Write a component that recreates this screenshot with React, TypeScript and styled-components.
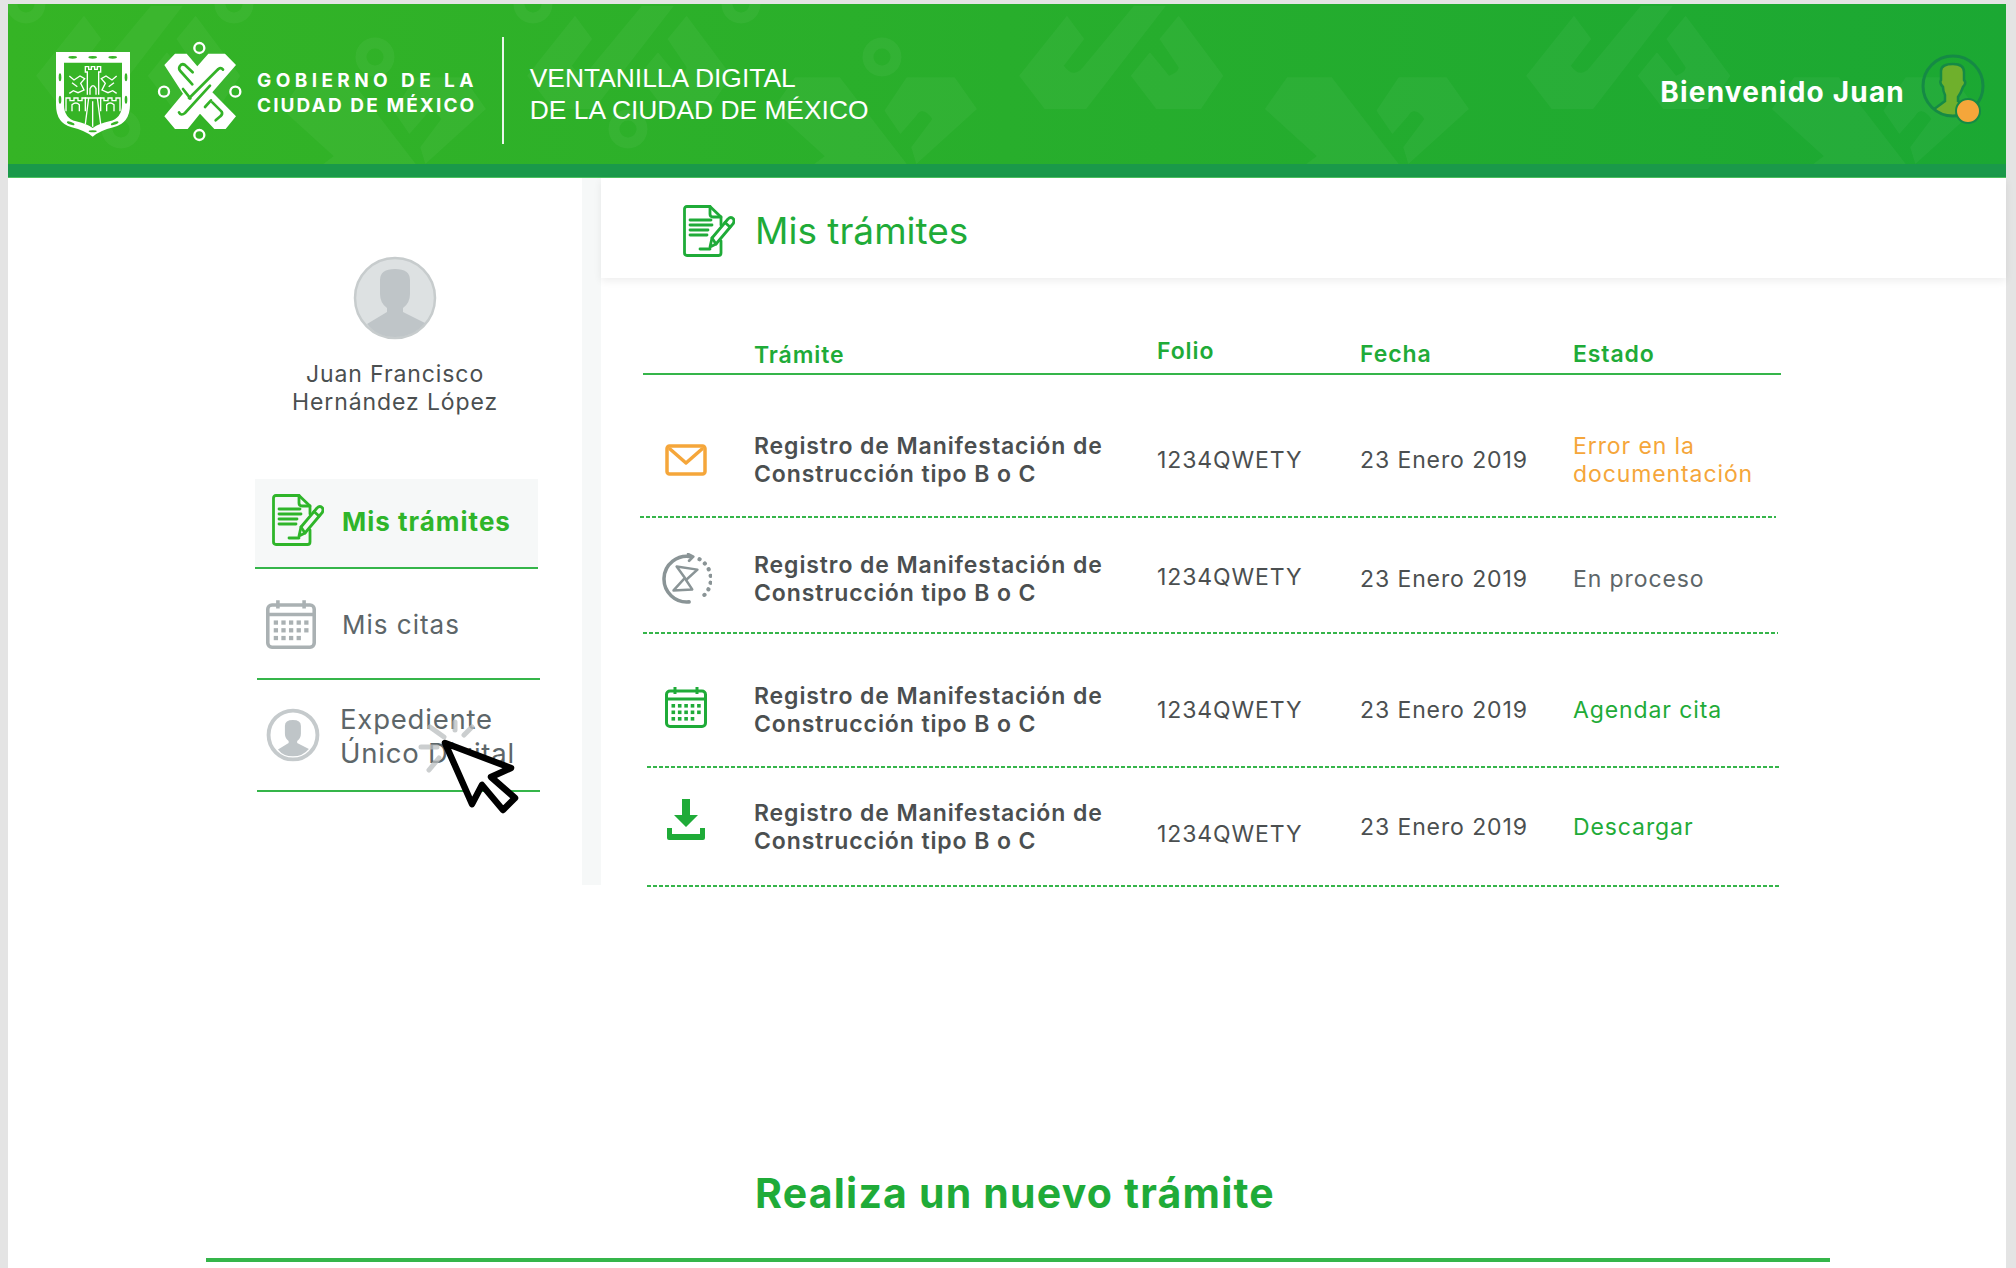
import styled, { createGlobalStyle } from "styled-components";

const GREEN = "#1fab38";
const ORANGE = "#f5a63a";
const TEXT = "#4b4f50";
const GREY = "#5d6669";

const GlobalStyle = createGlobalStyle`
	html, body {
		margin: 0;
		padding: 0;
		background: #e4e4e4;
	}
	* {
		box-sizing: border-box;
	}
`;

const Page = styled.div`
	width: 2016px;
	height: 1268px;
	padding: 4px 10px 0 8px;
	overflow: hidden;
	font-family: Inter, "Open Sans", sans-serif;
`;

const Card = styled.div`
	position: relative;
	height: 100%;
	background: #fff;
`;

const TopBar = styled.header`
	position: relative;
	display: flex;
	align-items: center;
	height: 160px;
	padding: 12px 13px 0 46px;
	background: linear-gradient(90deg, #35b425, #1ba833);
	color: #fff;
	overflow: hidden;
`;

const Pattern = styled.svg`
	position: absolute;
	left: 0;
	top: 0;
`;

const TopBand = styled.div`
	height: 14px;
	background: #1a994a;
	border-bottom: 1px solid #4cc25f;
`;

const Shield = styled.svg`
	position: relative;
	width: 85px;
	height: 92px;
	margin: 8px 20px 0 -4px;
	flex: none;
`;

const CityLogo = styled.svg`
	position: relative;
	width: 90px;
	height: 105px;
	margin-top: 2px;
	flex: none;
`;

const GovText = styled.div`
	position: relative;
	margin: 6px 0 0 12px;
	font-weight: 700;
	font-size: 19px;
	line-height: 25px;
	white-space: nowrap;
`;

const GovLine = styled.div<{ $track: number }>`
	letter-spacing: ${(p) => p.$track}px;
`;

const Divider = styled.div`
	position: relative;
	width: 2px;
	height: 107px;
	margin: 0 26px 0 24px;
	background: rgba(255, 255, 255, 0.9);
`;

const AppName = styled.div`
	position: relative;
	margin-top: 8px;
	font-family: "Liberation Sans", Arial, sans-serif;
	font-size: 26.4px;
	line-height: 32px;
	white-space: nowrap;
`;

const Welcome = styled.div`
	position: relative;
	margin: 3px 0 0 auto;
	font-size: 28px;
	font-weight: 700;
	letter-spacing: 1.2px;
`;

const UserBadge = styled.svg`
	position: relative;
	width: 74px;
	height: 74px;
	margin-left: 14px;
	flex: none;
`;

const Body = styled.div`
	display: flex;
	height: 707px;
`;

const Sidebar = styled.aside`
	display: flex;
	flex-direction: column;
	width: 593px;
	padding: 78px 0 0 247px;
	border-right: 19px solid #f6f8f8;
	flex: none;
`;

const Profile = styled.div`
	display: flex;
	flex-direction: column;
	align-items: center;
	width: 280px;
`;

const Avatar = styled.svg`
	width: 84px;
	height: 84px;
`;

const UserName = styled.div`
	margin-top: 20px;
	font-size: 23px;
	letter-spacing: 0.9px;
	line-height: 28px;
	color: ${TEXT};
	text-align: center;
`;

const Menu = styled.nav`
	margin-top: 63px;
`;

const MenuItem = styled.div<{ $active?: boolean; $height: number; $shift: number; $textAt: number }>`
	display: grid;
	grid-template-columns: ${(p) => p.$textAt}px 1fr;
	align-items: center;
	width: 283px;
	height: ${(p) => p.$height}px;
	margin-left: ${(p) => p.$shift}px;
	padding-bottom: ${(p) => (p.$active ? 6 : 0)}px;
	background: ${(p) => (p.$active ? "#f6f8f8" : "transparent")};
	border-bottom: 2px solid #35b54a;
	color: ${(p) => (p.$active ? "#2fb52a" : GREY)};
	font-weight: ${(p) => (p.$active ? 700 : 400)};
`;

const MenuIcon = styled.div<{ $left: number; $tint: string }>`
	display: flex;
	padding-left: ${(p) => p.$left}px;
	color: ${(p) => p.$tint};
`;

const MenuLabel = styled.div<{ $size: number; $track: number; $leading: number }>`
	margin-top: 2px;
	font-size: ${(p) => p.$size}px;
	letter-spacing: ${(p) => p.$track}px;
	line-height: ${(p) => p.$leading}px;
	white-space: nowrap;
`;

const Main = styled.main`
	flex: 1;
	min-width: 0;
`;

const TitleBar = styled.div`
	display: flex;
	align-items: center;
	gap: 20px;
	height: 100px;
	padding: 5px 0 0 82px;
	background: #fff;
	box-shadow: 0 3px 8px rgba(0, 0, 0, 0.07);
`;

const TitleIcon = styled.div`
	display: flex;
	color: ${GREEN};
`;

const Title = styled.h1`
	margin: 0;
	font-size: 37px;
	font-weight: 400;
	color: ${GREEN};
`;

const Table = styled.div`
	width: 1138px;
	margin: 58px 0 0 42px;
`;

const columns = "111px 403px 203px 213px 208px";

const HeadRow = styled.div`
	display: grid;
	grid-template-columns: ${columns};
	height: 39px;
	border-bottom: 2px solid #35b54a;
	color: ${GREEN};
	font-size: 23px;
	letter-spacing: 0.9px;
	font-weight: 600;
	line-height: 36px;
`;

const HeadCell = styled.div<{ $nudge?: number }>`
	margin-top: ${(p) => p.$nudge ?? 0}px;
`;

const Row = styled.div<{ $top: number; $bottom: number }>`
	display: grid;
	grid-template-columns: ${columns};
	align-items: center;
	padding: ${(p) => p.$top}px 0 ${(p) => p.$bottom}px;
	font-size: 23px;
	letter-spacing: 0.9px;
	line-height: 28px;
	color: ${TEXT};
`;

const RowLine = styled.div<{ $left: number; $right: number }>`
	height: 2px;
	margin: 0 ${(p) => p.$right}px 0 ${(p) => p.$left}px;
	background: repeating-linear-gradient(90deg, #35b54a 0 4px, transparent 4px 6px);
`;

const RowIcon = styled.div<{ $tint: string; $lift: number }>`
	display: flex;
	justify-content: center;
	width: 85px;
	margin-top: ${(p) => -p.$lift * 2}px;
	color: ${(p) => p.$tint};
`;

const Procedure = styled.div`
	font-weight: 600;
`;

const Cell = styled.div<{ $nudge?: number }>`
	margin-top: ${(p) => (p.$nudge ?? 0) * 2}px;
`;

const Status = styled.div<{ $tint: string }>`
	color: ${(p) => p.$tint};
`;

const NewSection = styled.section`
	display: flex;
	flex-direction: column;
`;

const NewTitle = styled.h2`
	margin: 285px 0 0 16px;
	font-size: 41px;
	letter-spacing: 1.2px;
	line-height: 46px;
	font-weight: 700;
	color: ${GREEN};
	text-align: center;
`;

const NewLine = styled.div`
	width: 1624px;
	height: 4px;
	margin: 42px 0 0 198px;
	background: #35b54a;
`;

const CursorMark = styled.svg`
	position: absolute;
	left: 407px;
	top: 706px;
	width: 120px;
	height: 110px;
`;

const patternLobes = [
	"M30 215 105 35 132 105 100 185Q115 225 130 190L210 5H260L135 315H70Z",
	"M205 215 235 145 265 215Q280 205 280 190L250 105 280 35 350 215 315 315H245Z",
	"M415 315 450 220H520L625 480H480L515 430 485 345Q495 305 515 330L560 440 510 480Z",
	"M590 320 625 220H700L735 315 640 480 632 430 665 345Q650 305 640 335L615 390Z",
];

function HeaderPattern()
{
	return (
		<Pattern width="1998" height="160">
			{[-983, -492, 0, 507].map((offset) => (
				<g key={offset} transform={`translate(${992 + offset} 0) scale(0.638 0.3333)`} fill="#fff" fillOpacity="0.04">
					{patternLobes.map((d) => <path key={d} d={d} />)}
				</g>
			))}
			{[-983, -492, 0, 507].map((offset) => (
				<g key={offset} fill="none" stroke="#fff" strokeOpacity="0.045" strokeWidth="11">
					<circle cx={359 + 8 + offset} cy="53" r="14" />
					<circle cx={113 + offset} cy="125" r="14" />
					<circle cx={10 + offset + 8} cy="0" r="14" />
					<circle cx={218 + offset + 8} cy="0" r="14" />
				</g>
			))}
		</Pattern>
	);
}

function ShieldLogo()
{
	return (
		<Shield viewBox="0 0 255 276">
			<path d="M18 12H240V170Q240 225 190 238 150 248 128 266 105 248 65 238 18 225 18 170Z" fill="#fff" />
			<path d="M42 44H216V170Q216 210 178 220 148 226 128 240 108 226 78 220 42 210 42 170Z" fill="#36b426" />
			<g fill="#36b426">
				<ellipse cx="68" cy="28" rx="13" ry="4" />
				<ellipse cx="128" cy="28" rx="13" ry="4" />
				<ellipse cx="188" cy="28" rx="13" ry="4" />
				<ellipse cx="30" cy="88" rx="4" ry="12" />
				<ellipse cx="30" cy="155" rx="4" ry="12" />
				<ellipse cx="228" cy="88" rx="4" ry="12" />
				<ellipse cx="228" cy="155" rx="4" ry="12" />
				<ellipse cx="62" cy="226" rx="12" ry="4" transform="rotate(20 62 226)" />
				<ellipse cx="128" cy="250" rx="12" ry="3" />
				<ellipse cx="194" cy="226" rx="12" ry="4" transform="rotate(-20 194 226)" />
			</g>
			<g fill="none" stroke="#fff" strokeWidth="4">
				<path d="M112 140V72H106V56H116V64H124V56H134V64H142V56H152V72H146V140" />
				<path d="M120 140V122Q129 104 138 122V140" />
				<path d="M48 190V150H60V158H72V150H84V158H96V150H106V190M66 190V170Q78 160 88 170V190" />
				<path d="M152 190V150H162V158H174V150H186V158H198V150H210V190M170 190V170Q180 160 192 170V190" />
				<path d="M104 150H154M116 150 106 228M142 150 152 228M128 160V236" />
				<path d="M58 84 72 96 90 84 104 92 92 106 102 126 84 134 70 128 58 136M66 104 82 116" />
				<path d="M200 84 186 96 168 84 154 92 166 106 156 126 174 134 188 128 200 136M192 104 176 116" />
			</g>
		</Shield>
	);
}

function MexicoCityLogo()
{
	return (
		<CityLogo viewBox="0 0 270 315">
			<g fill="none" stroke="#fff" strokeWidth="7">
				<circle cx="133" cy="27" r="15" />
				<circle cx="133" cy="288" r="15" />
				<circle cx="27" cy="158" r="15" />
				<circle cx="241" cy="158" r="15" />
			</g>
			<path d="M28 78 60 44H95L127 82 160 44H210L243 78 172 160 243 232 212 270H178L135 224 98 270H60L28 232 84 164Z" fill="#fff" />
			<g fill="none" stroke="#33b227" strokeWidth="8" strokeLinecap="round">
				<path d="M113 100 90 78Q80 72 74 82 70 90 76 96L112 136" />
				<path d="M190 90 100 180" strokeLinecap="butt" />
				<path d="M190 90Q198 84 204 92" />
				<path d="M165 140 90 222Q78 232 72 220" />
				<path d="M172 190 200 218Q204 226 196 232L182 244" />
				<path d="M84 150 106 178" />
				<path d="M150 204 168 184" />
			</g>
		</CityLogo>
	);
}

function UserStatus()
{
	return (
		<UserBadge viewBox="0 0 74 74">
			<defs>
				<clipPath id="badge-clip"><circle cx="34" cy="33" r="30" /></clipPath>
			</defs>
			<g clipPath="url(#badge-clip)">
				<path d="M22 18Q22 11 34 11 45 11 45 19V27Q48 30 44 34 42 40 39 44V48L64 64H4L18 54 26 48V42Q24 38 24 34 20 30 22 27Z" fill="#6fb02c" stroke="#158a45" strokeWidth="2.5" />
			</g>
			<circle cx="34" cy="33" r="30" fill="none" stroke="#158a45" strokeWidth="3" />
			<circle cx="49" cy="58" r="12" fill={ORANGE} stroke="#158a45" strokeWidth="2" />
		</UserBadge>
	);
}

const personPath = "M27 24Q27 13 42 13 57 13 57 24V38Q57 47 50 52V56L72 67Q60 81 42 81 24 81 14 68L34 56V52Q27 47 27 38Z";

function PersonFigure()
{
	return (
		<>
			<circle cx="42" cy="42" r="40" fill="#dde1e2" stroke="#c7cccd" strokeWidth="2.5" />
			<path d={personPath} fill="#bfc5c8" />
		</>
	);
}

function PersonRing()
{
	return (
		<svg width="54" height="54" viewBox="0 0 84 84">
			<circle cx="42" cy="42" r="38" fill="#fff" stroke="#c5cacc" strokeWidth="6" />
			<path d={personPath} transform="translate(7 8) scale(0.83)" fill="#bfc5c8" />
		</svg>
	);
}

function DocPenIcon({ size }: { size: number })
{
	return (
		<svg width={size} height={size} viewBox="0 0 52 52" fill="none" stroke="currentColor" strokeWidth="2.800" strokeLinecap="round" strokeLinejoin="round">
			<path d="M38 36V48Q38 50.500 35.500 50.500H4Q1.500 50.500 1.500 48V4Q1.500 1.500 4 1.500H27L38 12V20" />
			<path d="M27 1.500V9Q27 12 30 12H38" />
			<path d="M7 15H28M7 20H29M7 25H25M7 30H24M17 44H27" />
			<path d="M27 42 29 33 45 14Q48 11 50.500 14 52 17 49 20L33 39Z" />
			<path d="M42 17.500 47 22M29 33 33 39" />
		</svg>
	);
}

function CalendarIcon({ size }: { size: number })
{
	const dots = [];
	for (let row = 0; row < 3; row++)
		for (let col = 0; col < (row === 2 ? 4 : 5); col++)
			dots.push(<rect key={`${row}-${col}`} x={6.500 + col * 6.400} y={18 + row * 6.500} width="3.600" height="3.600" fill="currentColor" />);
	return (
		<svg width={size} height={size} viewBox="0 0 42 42" fill="none" stroke="currentColor" strokeWidth="3">
			<rect x="1.500" y="5" width="39" height="35.500" rx="3.500" />
			<path d="M1.500 13H40.500M10 1V8M32 1V8" />
			<g stroke="none">{dots}</g>
		</svg>
	);
}

function MailIcon()
{
	return (
		<svg width="42" height="32" viewBox="0 0 42 32" fill="none" stroke="currentColor" strokeWidth="3.500" strokeLinejoin="round">
			<rect x="2" y="2" width="38" height="28" rx="2.500" />
			<path d="M5 5 21 19 37 5" strokeLinecap="round" />
		</svg>
	);
}

function HourglassIcon()
{
	return (
		<svg width="52" height="52" viewBox="0 0 50 50" fill="none" stroke="currentColor" strokeLinecap="round" strokeLinejoin="round">
			<path d="M30 3.500A22 22 0 1 0 28 47" strokeWidth="3.400" />
			<path d="M27 1 32 3.500 28 7.500" strokeWidth="2.600" />
			<path d="M38 6A22 22 0 0 1 38 44" strokeWidth="4" strokeDasharray="0.100 6.500" />
			<path d="M16 13 36 16 25 26 31 35 13 36 24 24Z" strokeWidth="2.400" />
		</svg>
	);
}

function DownloadIcon()
{
	return (
		<svg width="38" height="42" viewBox="0 0 38 42" fill="currentColor" stroke="none">
			<path d="M15 0H23V16H31L19 28 7 16H15Z" />
			<path d="M0 29H5V35H33V29H38V39Q38 41 36 41H2Q0 41 0 39Z" />
		</svg>
	);
}

const rows = [
	{ icon: <MailIcon />, tint: ORANGE, top: 57, bottom: 28, lift: 0, left: -3, right: 5, status: ["Error en la", "documentación"], statusTint: ORANGE, folio: 0, date: 0 },
	{ icon: <HourglassIcon />, tint: "#8a9496", top: 33, bottom: 25, lift: 0, left: 0, right: 3, status: ["En proceso"], statusTint: GREY, folio: -2, date: 0 },
	{ icon: <CalendarIcon size={42} />, tint: GREEN, top: 48, bottom: 28, lift: 3, left: 4, right: 0, status: ["Agendar cita"], statusTint: GREEN, folio: 0, date: 0 },
	{ icon: <DownloadIcon />, tint: GREEN, top: 31, bottom: 30, lift: 7, left: 4, right: 0, status: ["Descargar"], statusTint: GREEN, folio: 7, date: 0 },
];

function App()
{
	return (
		<Page>
			<GlobalStyle />
			<Card>
				<TopBar>
					<HeaderPattern />
					<ShieldLogo />
					<MexicoCityLogo />
					<GovText>
						<GovLine $track={4.4}>GOBIERNO DE LA</GovLine>
						<GovLine $track={2.1}>CIUDAD DE MÉXICO</GovLine>
					</GovText>
					<Divider />
					<AppName>VENTANILLA DIGITAL<br />DE LA CIUDAD DE MÉXICO</AppName>
					<Welcome>Bienvenido Juan</Welcome>
					<UserStatus />
				</TopBar>
				<TopBand />
				<Body>
					<Sidebar>
						<Profile>
							<Avatar viewBox="0 0 84 84"><PersonFigure /></Avatar>
							<UserName>Juan Francisco<br />Hernández López</UserName>
						</Profile>
						<Menu>
							<MenuItem $active $height={90} $shift={0} $textAt={87}>
								<MenuIcon $left={17} $tint="#2fb52a"><DocPenIcon size={52} /></MenuIcon>
								<MenuLabel $size={26} $track={1} $leading={33}>Mis trámites</MenuLabel>
							</MenuItem>
							<MenuItem $height={111} $shift={2} $textAt={85}>
								<MenuIcon $left={9} $tint="#aab1b3"><CalendarIcon size={50} /></MenuIcon>
								<MenuLabel $size={26} $track={1} $leading={33}>Mis citas</MenuLabel>
							</MenuItem>
							<MenuItem $height={112} $shift={2} $textAt={83}>
								<MenuIcon $left={9} $tint="#bfc5c8"><PersonRing /></MenuIcon>
								<MenuLabel $size={27.5} $track={0.8} $leading={34}>Expediente<br />Único Digital</MenuLabel>
							</MenuItem>
						</Menu>
					</Sidebar>
					<Main>
						<TitleBar>
							<TitleIcon><DocPenIcon size={52} /></TitleIcon>
							<Title>Mis trámites</Title>
						</TitleBar>
						<Table>
							<HeadRow>
								<div />
								<HeadCell $nudge={1}>Trámite</HeadCell>
								<HeadCell $nudge={-3}>Folio</HeadCell>
								<HeadCell>Fecha</HeadCell>
								<HeadCell>Estado</HeadCell>
							</HeadRow>
							{rows.map((row, index) => (
								<div key={index}>
									<Row $top={row.top} $bottom={row.bottom}>
										<RowIcon $tint={row.tint} $lift={row.lift}>{row.icon}</RowIcon>
										<Procedure>Registro de Manifestación de<br />Construcción tipo B o C</Procedure>
										<Cell $nudge={row.folio}>1234QWETY</Cell>
										<Cell $nudge={row.date}>23 Enero 2019</Cell>
										<Status $tint={row.statusTint}>
											{row.status.map((line) => <div key={line}>{line}</div>)}
										</Status>
									</Row>
									<RowLine $left={row.left} $right={row.right} />
								</div>
							))}
						</Table>
					</Main>
				</Body>
				<NewSection>
					<NewTitle>Realiza un nuevo trámite</NewTitle>
					<NewLine />
				</NewSection>
				<CursorMark viewBox="0 0 120 110">
					<g stroke="#b9bdbf" strokeOpacity="0.75" strokeWidth="5" strokeLinecap="round">
						<path d="M6 37H22M15 17 29 27M40 12V20M57 17 49 25M14 60 24 48" />
					</g>
					<path d="M30 33 96 58 76 67 100 88 88 100 67 75 57 94Z" fill="#fff" stroke="#000" strokeWidth="6.500" strokeLinejoin="round" />
				</CursorMark>
			</Card>
		</Page>
	);
}

export default App;
